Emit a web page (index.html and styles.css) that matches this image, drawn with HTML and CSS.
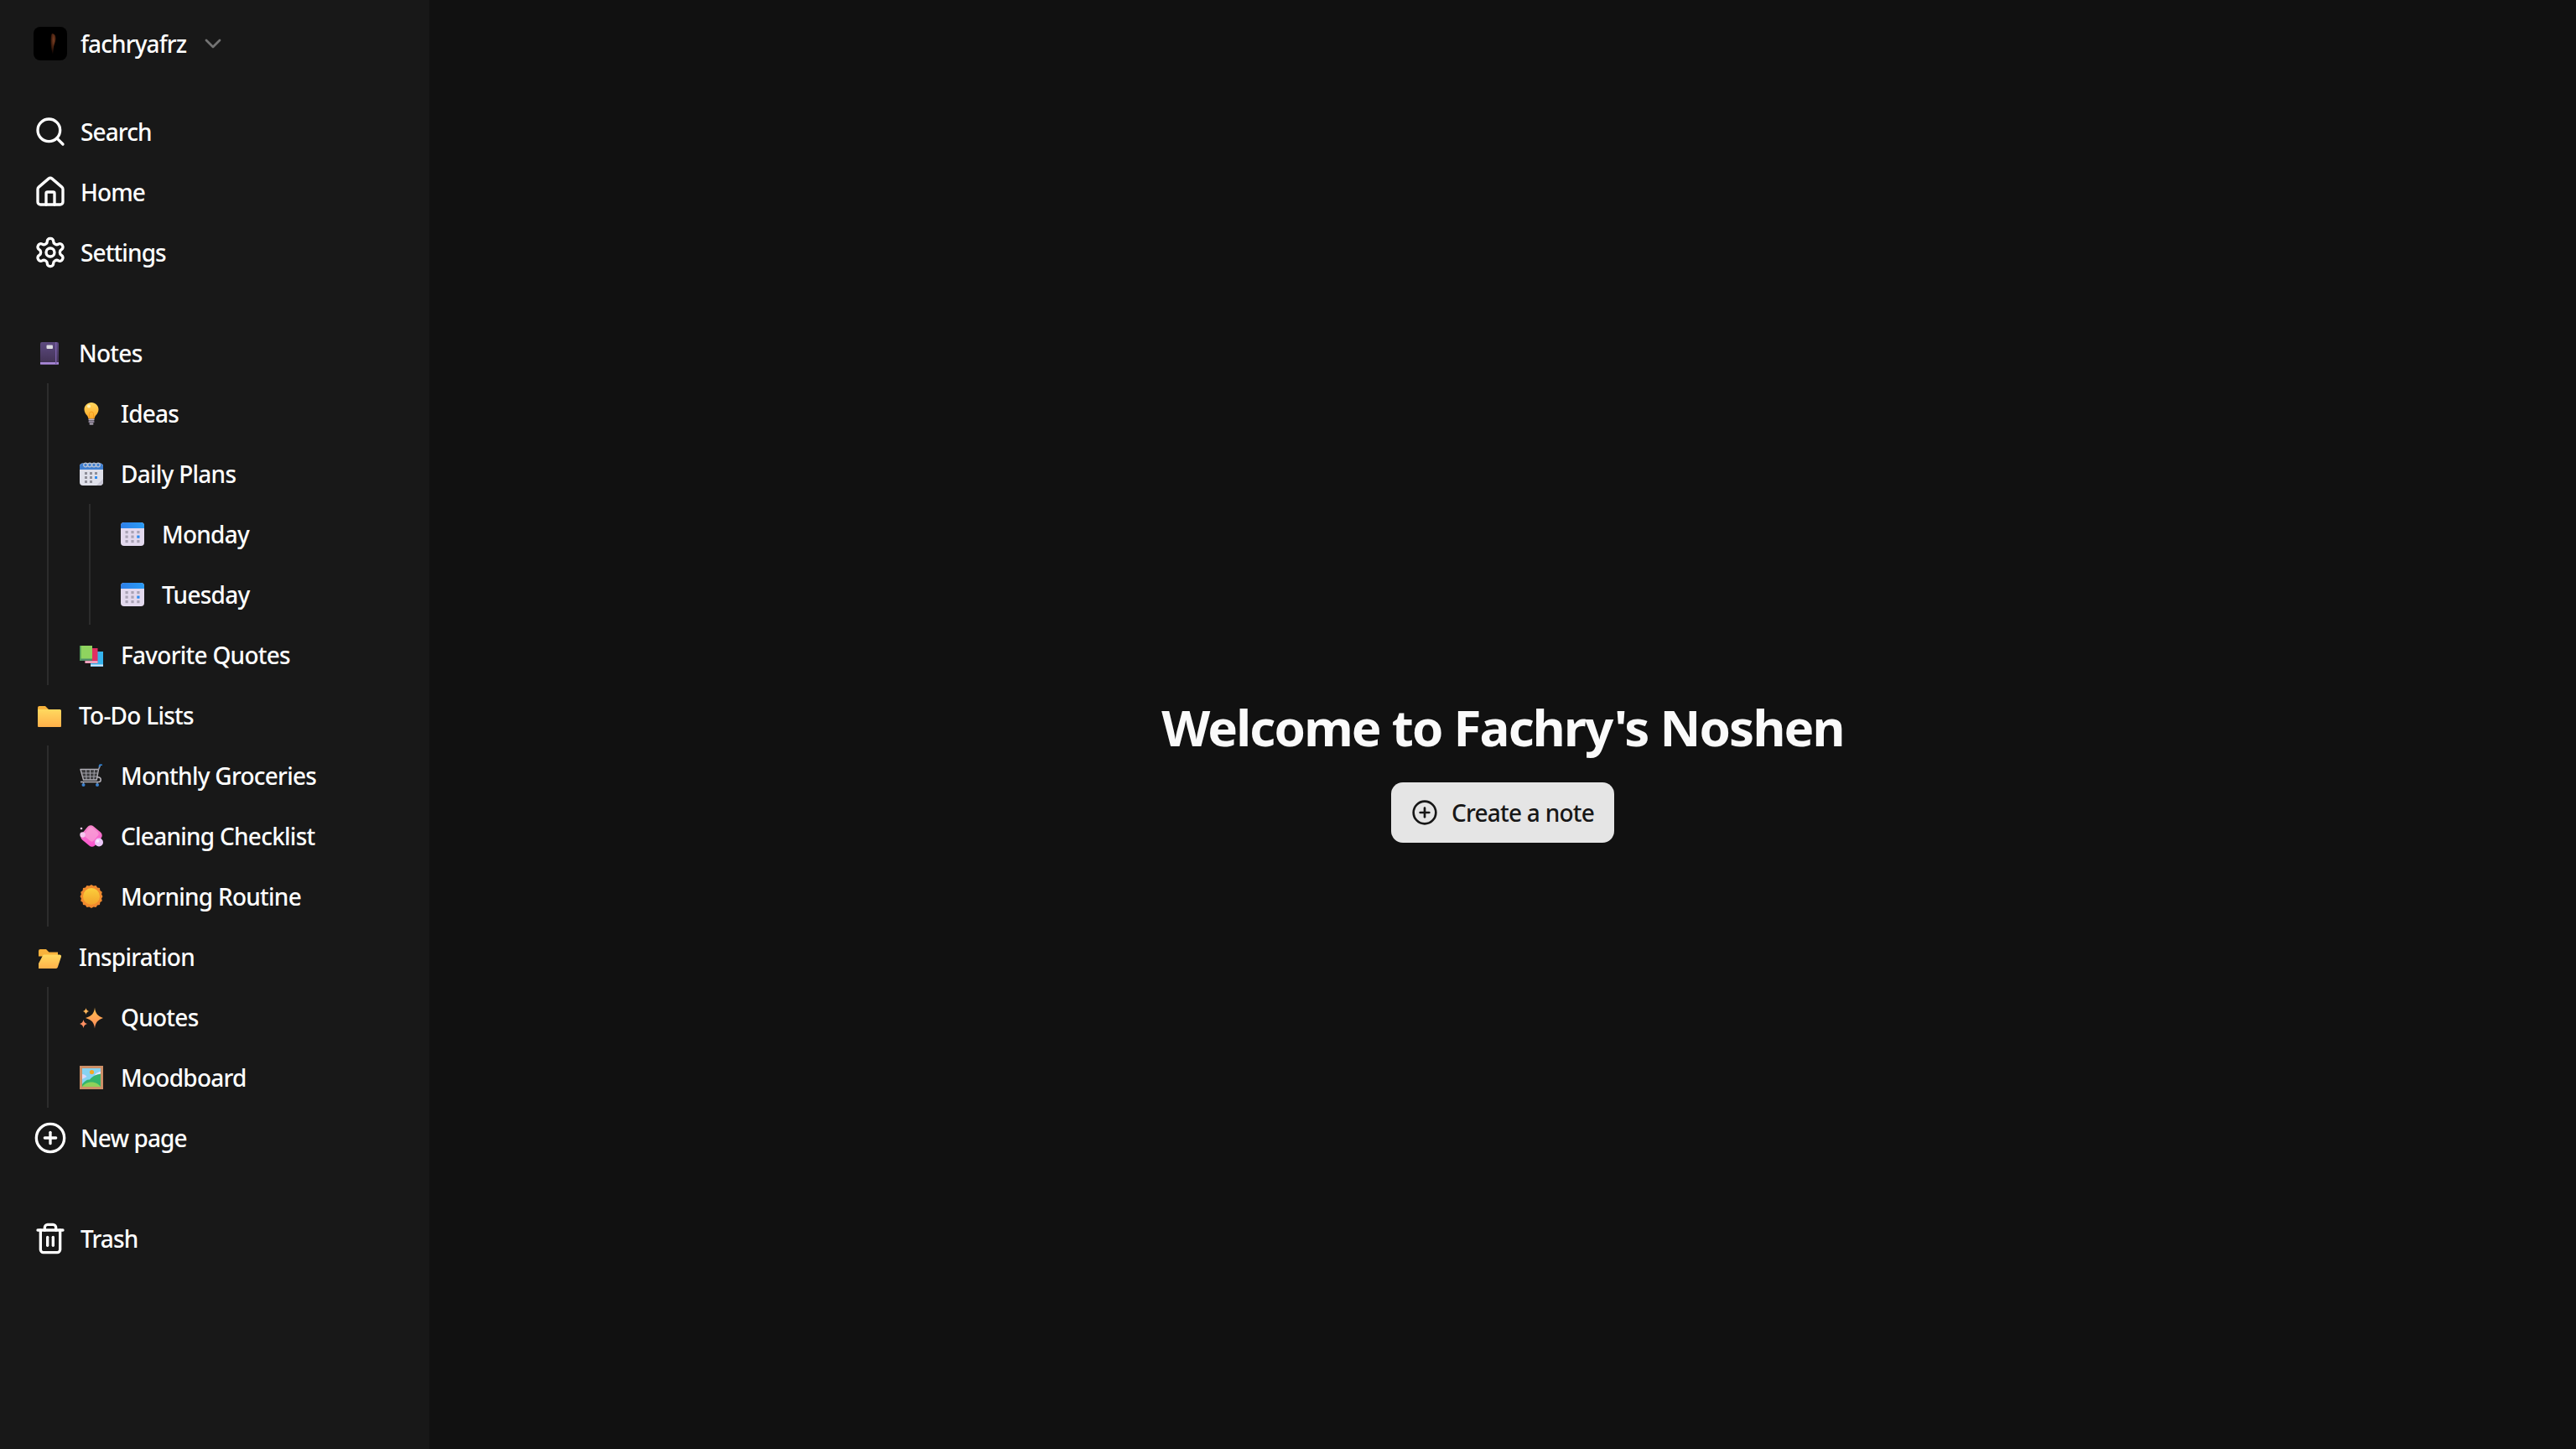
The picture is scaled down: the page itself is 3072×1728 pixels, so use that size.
FILE: index.html
```html
<!DOCTYPE html>
<html lang="en">

<head>
    <meta charset="UTF-8">
    <title>Fachry's Noshen</title>
    <link rel="stylesheet" href="styles.css">
</head>

<body>
    <!-- icones desenhados uma vez e reutilizados -->
    <svg class="defs" width="0" height="0">
        <defs>
            <linearGradient id="g-book" x1="0" y1="0" x2="0" y2="1"><stop offset="0" stop-color="#5d4a80"/><stop offset="1" stop-color="#3f3050"/></linearGradient>
            <linearGradient id="g-bulb" x1="0" y1="0" x2="0" y2="1"><stop offset="0" stop-color="#ffd75e"/><stop offset="1" stop-color="#ffa726"/></linearGradient>
            <linearGradient id="g-head" x1="0" y1="0" x2="1" y2="0"><stop offset="0" stop-color="#2e7fe8"/><stop offset="1" stop-color="#2a9bf5"/></linearGradient>
            <linearGradient id="g-folder" x1="0" y1="0" x2="0" y2="1"><stop offset="0" stop-color="#ffd95f"/><stop offset="1" stop-color="#ffb04a"/></linearGradient>
            <linearGradient id="g-pink" x1="0" y1="0" x2="1" y2="1"><stop offset="0" stop-color="#f58ac8"/><stop offset="1" stop-color="#fb4fd0"/></linearGradient>
            <linearGradient id="g-sun" x1="0" y1="0" x2="0" y2="1"><stop offset="0" stop-color="#fbcf3c"/><stop offset="1" stop-color="#f3a32b"/></linearGradient>
            <linearGradient id="g-star" x1="0" y1="0" x2="0" y2="1"><stop offset="0" stop-color="#ffc04d"/><stop offset="1" stop-color="#ff8a5c"/></linearGradient>

            <symbol id="e-book" viewBox="0 0 28 28">
                <rect x="3" y="1" width="22" height="27" rx="2" fill="url(#g-book)"/>
                <rect x="3" y="25" width="22" height="2.6" fill="#a988d8"/>
                <rect x="21" y="1" width="1.4" height="27" fill="#7a5fa8"/>
                <rect x="10.5" y="4.5" width="7.5" height="4.5" rx="1" fill="#dcdce0"/>
            </symbol>
            <symbol id="e-bulb" viewBox="0 0 28 28">
                <path d="M14 1C9.2 1 5.5 4.7 5.5 9.3c0 3 1.4 5 2.9 6.8 1.2 1.4 1.9 2.8 2 4.4h7.2c.1-1.6.8-3 2-4.4 1.5-1.8 2.9-3.8 2.9-6.8C22.500 4.700 18.800 1 14 1z" fill="url(#g-bulb)"/>
                <circle cx="11" cy="5.500" r="2" fill="#fff1b8"/>
                <path d="M11.500 20v-5.500a2.500 2.500 0 1 1 5 0V20" fill="none" stroke="#f59a1c" stroke-width="1"/>
                <rect x="10.400" y="20.500" width="7.200" height="2" rx="1" fill="#bdb3c6"/>
                <rect x="10.400" y="23" width="7.200" height="2" rx="1" fill="#8f8599"/>
                <rect x="11.500" y="25.500" width="5" height="2" rx="1" fill="#bdb3c6"/>
            </symbol>
            <symbol id="e-cal-spiral" viewBox="0 0 28 28">
                <rect x="0" y="1.500" width="28" height="26.500" rx="4" fill="#dfe0ea"/>
                <path d="M0 9V5.500a4 4 0 0 1 4-4h20a4 4 0 0 1 4 4V9z" fill="#3f7fd0"/>
                <g fill="none" stroke="#b9c4d6" stroke-width="1.300">
                    <circle cx="7" cy="3.500" r="2.300"/><circle cx="12" cy="3.500" r="2.300"/><circle cx="17" cy="3.500" r="2.300"/><circle cx="22" cy="3.500" r="2.300"/>
                </g>
                <g fill="#8f8f99">
                    <rect x="6" y="12" width="3" height="3"/><rect x="12" y="12" width="3" height="3"/><rect x="18" y="12" width="3" height="3"/>
                    <rect x="6" y="17" width="3" height="3"/><rect x="12" y="17" width="3" height="3"/>
                    <rect x="6" y="22" width="3" height="3"/><rect x="12" y="22" width="3" height="3"/>
                </g>
                <rect x="18" y="17" width="3" height="3" fill="#2e8cf0"/>
                <path d="M28 20l-8 8h3.500a4.500 4.500 0 0 0 4.500-4.500z" fill="#c8c6d4"/>
            </symbol>
            <symbol id="e-cal" viewBox="0 0 28 28">
                <rect x="0" y="0" width="28" height="28" rx="4" fill="#e3d9ee"/>
                <path d="M0 7V4a4 4 0 0 1 4-4h20a4 4 0 0 1 4 4v3z" fill="url(#g-head)"/>
                <g fill="#a9a3b5">
                    <rect x="5.500" y="10" width="3.200" height="3.200"/><rect x="12.400" y="10" width="3.200" height="3.200"/><rect x="19.300" y="10" width="3.200" height="3.200"/>
                    <rect x="5.500" y="15.500" width="3.200" height="3.200"/><rect x="12.400" y="15.500" width="3.200" height="3.200"/>
                    <rect x="5.500" y="21" width="3.200" height="3.200"/><rect x="12.400" y="21" width="3.200" height="3.200"/><rect x="19.300" y="21" width="3.200" height="3.200"/>
                </g>
                <rect x="19.300" y="15.500" width="3.200" height="3.200" fill="#2e8cf0"/>
            </symbol>
            <symbol id="e-books" viewBox="0 0 28 28">
                <rect x="13" y="10" width="15" height="18" fill="#35b4ee"/>
                <rect x="13" y="25.500" width="15" height="2" fill="#d7e4f7"/>
                <rect x="6.500" y="6" width="15" height="18" fill="#e02f62"/>
                <rect x="6.500" y="21.500" width="15" height="2" fill="#f0cfe0"/>
                <rect x="0" y="3" width="15" height="18" fill="#8fd45f"/>
                <rect x="0" y="18.500" width="15" height="2.500" fill="#4f8d6a"/>
                <rect x="0" y="3" width="1.600" height="18" fill="#4f9a58"/>
            </symbol>
            <symbol id="e-folder" viewBox="0 0 28 28">
                <path d="M0 5a2 2 0 0 1 2-2h7l4 4H0z" fill="#f7b23c"/>
                <path d="M0 7h26.500A1.500 1.500 0 0 1 28 8.500V27a1 1 0 0 1-1 1H1a1 1 0 0 1-1-1z" fill="url(#g-folder)"/>
            </symbol>
            <symbol id="e-folder-open" viewBox="0 0 28 28">
                <path d="M1 7a2 2 0 0 1 2-2h7l3.500 3.500H24v5H1z" fill="#f7b23c"/>
                <path d="M1 28 1 22 6 12.500a2 2 0 0 1 1.800-1H26a2 2 0 0 1 1.900 2.700l-4.200 12.600A2 2 0 0 1 22 28z" fill="url(#g-folder)"/>
            </symbol>
            <symbol id="e-cart" viewBox="0 0 28 28">
                <path d="M1 6.500h21.500l-2.200 12.500H4.500z" fill="#3a3a3c" stroke="#b0aeb6" stroke-width="1.400" stroke-linejoin="round"/>
                <path d="M2.500 11h19M3.500 15h17M7.500 6.500l.6 12.500M12.500 6.500v12.500M17.500 6.500l-.8 12.500" fill="none" stroke="#a09fa8" stroke-width="1.100"/>
                <path d="M22.300 7 24.500 2" stroke="#9a9aa4" stroke-width="1.500" fill="none"/>
                <path d="M23 3.500 24.200 1l2.800.3" stroke="#2e7fd0" stroke-width="1.600" fill="none"/>
                <path d="M20.500 15.500l2.500.5c3 .7 3 5.500-.2 5.500H1" fill="none" stroke="#b5b2ba" stroke-width="1.500"/>
                <circle cx="4.500" cy="25" r="2" fill="#3b82d0"/>
                <circle cx="21" cy="25" r="2" fill="#3b82d0"/>
                <rect x="3.800" y="21.500" width="1.400" height="2" fill="#9a9aa4"/>
                <rect x="20.300" y="21.500" width="1.400" height="2" fill="#9a9aa4"/>
            </symbol>
            <symbol id="e-soap" viewBox="0 0 28 28">
                <rect x="3.500" y="3.500" width="21" height="21" rx="5" transform="rotate(40 14 14)" fill="url(#g-pink)"/>
                <rect x="7" y="5" width="14" height="14" rx="3.500" transform="rotate(40 14 12)" fill="#f9a2d9" opacity=".7"/>
                <circle cx="3.500" cy="12.500" r="3.200" fill="#f5c6ee"/>
                <circle cx="2" cy="5" r="1.300" fill="#e9c3e4"/>
                <circle cx="23" cy="21.500" r="5" fill="#ecc7f8"/>
                <circle cx="21.500" cy="20" r="1.800" fill="#fbeeff"/>
            </symbol>
            <symbol id="e-sun" viewBox="0 0 28 28">
                <path d="M14 0l2.600 1.400L19.500 1l1.600 2.500 2.900.6.400 2.900 2.400 1.700-.7 2.900L27.500 14l-1.400 2.600.7 2.800-2.400 1.700-.4 2.900-2.900.6L19.500 27l-2.900-.5L14 28l-2.600-1.500-2.900.5-1.600-2.400-2.900-.6-.4-2.900-2.400-1.700.7-2.800L.5 14l1.400-2.400-.7-2.900 2.400-1.700.4-2.900 2.900-.6L8.500 1l2.900.4z" fill="#f18a2e"/>
                <circle cx="14" cy="14" r="10" fill="url(#g-sun)"/>
            </symbol>
            <symbol id="e-sparkles" viewBox="0 0 28 28">
                <path d="M18 2.500c.8 6.800 3.200 10.200 10 12.500-6.800 2.300-9.200 5.700-10 12.500-.8-6.800-3.200-10.200-11-12.500 7.800-2.300 10.200-5.700 11-12.500z" fill="url(#g-star)"/>
                <path d="M7.500 3c.4 2.200 1.500 3.300 3.700 4-2.200.7-3.300 1.800-3.700 4-.4-2.200-1.500-3.300-3.700-4 2.200-.7 3.300-1.800 3.700-4z" fill="#fdb458"/>
                <path d="M4.500 17c.5 2.700 1.700 4 4.500 5-2.800 1-4 2.300-4.500 5-.5-2.700-1.700-4-4.500-5 2.800-1 4-2.300 4.500-5z" fill="#ff8f62"/>
            </symbol>
            <symbol id="e-picture" viewBox="0 0 28 28">
                <rect width="28" height="28" fill="#cd9068"/>
                <rect x="3" y="3" width="22" height="22" fill="#86d3f2"/>
                <path d="M3 10c2 0 4 1 5.500 3L3 16z" fill="#dcd9f7"/>
                <path d="M25 7c-2 0-6 2-7 4 2.500.5 5 0 7-1z" fill="#e6e2fa"/>
                <circle cx="14.500" cy="7.500" r="2.600" fill="#f4a823"/>
                <path d="M3 22c3-4 6-6 9-5.500 4-5 9-6 13-7V25H3z" fill="#34b56c"/>
                <path d="M3 25c3-4 7-5.500 11-5.500s8 1.500 11 5.500z" fill="#8fd25a"/>
            </symbol>
        </defs>
    </svg>

    <aside class="sidebar">
        <div class="conta">
            <svg class="avatar" viewBox="0 0 40 40">
                <defs><radialGradient id="g-face" cx=".55" cy=".3" r=".7"><stop offset="0" stop-color="#7a4024"/><stop offset=".6" stop-color="#3e1b0c"/><stop offset="1" stop-color="#0c0301"/></radialGradient></defs>
                <rect width="40" height="40" rx="8" fill="#000"/>
                <path d="M22 8c3 0 5 3 4.500 7-.3 3-2 6-2.500 9l-1 9c-1-3-2.500-9-2.500-15 0-5 .5-9 1.500-10z" fill="url(#g-face)"/>
            </svg>
            <span>fachryafrz</span>
            <svg class="chevron" viewBox="0 0 24 24"><path d="m6 9 6 6 6-6"/></svg>
        </div>

        <nav class="grupo">
            <a class="item">
                <svg class="ico" viewBox="0 0 24 24"><circle cx="11" cy="11" r="8"/><path d="m21 21-4.300-4.300"/></svg>
                <span>Search</span>
            </a>
            <a class="item">
                <svg class="ico" viewBox="0 0 24 24"><path d="M15 21v-8a1 1 0 0 0-1-1h-4a1 1 0 0 0-1 1v8"/><path d="M3 10a2 2 0 0 1 .709-1.528l7-5.999a2 2 0 0 1 2.582 0l7 5.999A2 2 0 0 1 21 10v9a2 2 0 0 1-2 2H5a2 2 0 0 1-2-2z"/></svg>
                <span>Home</span>
            </a>
            <a class="item">
                <svg class="ico" viewBox="0 0 24 24"><path d="M12.220 2h-.44a2 2 0 0 0-2 2v.18a2 2 0 0 1-1 1.730l-.43.25a2 2 0 0 1-2 0l-.15-.08a2 2 0 0 0-2.730.73l-.22.38a2 2 0 0 0 .73 2.730l.15.1a2 2 0 0 1 1 1.720v.51a2 2 0 0 1-1 1.740l-.15.09a2 2 0 0 0-.73 2.730l.22.38a2 2 0 0 0 2.730.73l.15-.08a2 2 0 0 1 2 0l.43.25a2 2 0 0 1 1 1.730V20a2 2 0 0 0 2 2h.44a2 2 0 0 0 2-2v-.18a2 2 0 0 1 1-1.730l.43-.25a2 2 0 0 1 2 0l.15.08a2 2 0 0 0 2.730-.73l.22-.39a2 2 0 0 0-.73-2.730l-.15-.08a2 2 0 0 1-1-1.740v-.5a2 2 0 0 1 1-1.740l.15-.09a2 2 0 0 0 .73-2.730l-.22-.38a2 2 0 0 0-2.730-.73l-.15.08a2 2 0 0 1-2 0l-.43-.25a2 2 0 0 1-1-1.730V4a2 2 0 0 0-2-2z"/><circle cx="12" cy="12" r="3"/></svg>
                <span>Settings</span>
            </a>
        </nav>

        <div class="grupo">
            <a class="pagina"><svg class="emoji"><use href="#e-book"/></svg><span>Notes</span></a>
            <div class="arvore">
                <a class="pagina"><svg class="emoji"><use href="#e-bulb"/></svg><span>Ideas</span></a>
                <a class="pagina"><svg class="emoji"><use href="#e-cal-spiral"/></svg><span>Daily Plans</span></a>
                <div class="arvore">
                    <a class="pagina"><svg class="emoji"><use href="#e-cal"/></svg><span>Monday</span></a>
                    <a class="pagina"><svg class="emoji"><use href="#e-cal"/></svg><span>Tuesday</span></a>
                </div>
                <a class="pagina"><svg class="emoji"><use href="#e-books"/></svg><span>Favorite Quotes</span></a>
            </div>
            <a class="pagina"><svg class="emoji"><use href="#e-folder"/></svg><span>To-Do Lists</span></a>
            <div class="arvore">
                <a class="pagina"><svg class="emoji"><use href="#e-cart"/></svg><span>Monthly Groceries</span></a>
                <a class="pagina"><svg class="emoji"><use href="#e-soap"/></svg><span>Cleaning Checklist</span></a>
                <a class="pagina"><svg class="emoji"><use href="#e-sun"/></svg><span>Morning Routine</span></a>
            </div>
            <a class="pagina"><svg class="emoji"><use href="#e-folder-open"/></svg><span>Inspiration</span></a>
            <div class="arvore">
                <a class="pagina"><svg class="emoji"><use href="#e-sparkles"/></svg><span>Quotes</span></a>
                <a class="pagina"><svg class="emoji"><use href="#e-picture"/></svg><span>Moodboard</span></a>
            </div>
            <a class="item">
                <svg class="ico" viewBox="0 0 24 24"><circle cx="12" cy="12" r="10"/><path d="M8 12h8"/><path d="M12 8v8"/></svg>
                <span>New page</span>
            </a>
        </div>

        <nav class="grupo">
            <a class="item">
                <svg class="ico" viewBox="0 0 24 24"><path d="M3 6h18"/><path d="M19 6v14c0 1-1 2-2 2H7c-1 0-2-1-2-2V6"/><path d="M8 6V4c0-1 1-2 2-2h4c1 0 2 1 2 2v2"/><path d="M10 11v6"/><path d="M14 11v6"/></svg>
                <span>Trash</span>
            </a>
        </nav>
    </aside>

    <main class="conteudo">
        <h1>Welcome to Fachry's Noshen</h1>
        <button class="criar">
            <svg viewBox="0 0 24 24"><circle cx="12" cy="12" r="10"/><path d="M8 12h8"/><path d="M12 8v8"/></svg>
            <span>Create a note</span>
        </button>
    </main>
</body>

</html>
```

FILE: styles.css
```css
* {
    box-sizing: border-box;
}

html,
body {
    height: 100%;
}

body {
    margin: 0;
    display: flex;
    background-color: #111111;
    color: #ffffff;
    font-family: "Noto Sans", "Open Sans", sans-serif;
    font-size: 28px;
    font-weight: 500;
    overflow: hidden;
}

.defs {
    position: absolute;
}

.sidebar {
    width: 512px;
    flex-shrink: 0;
    padding-top: 32px;
    background-color: #181818;
}

.conta {
    display: flex;
    align-items: center;
    gap: 16px;
    height: 40px;
    padding-left: 40px;
    margin-bottom: 49px;
}

.conta span {
    letter-spacing: -0.9px;
}

.avatar {
    width: 40px;
    height: 40px;
}

.chevron {
    width: 32px;
    height: 32px;
    fill: none;
    stroke: #737373;
    stroke-width: 2;
    stroke-linecap: round;
    stroke-linejoin: round;
}

.grupo {
    margin-bottom: 48px;
}

.item,
.pagina {
    display: flex;
    align-items: center;
    height: 72px;
    letter-spacing: -0.75px;
}

.item {
    gap: 16px;
    padding-left: 40px;
    letter-spacing: -0.9px;
}

.ico {
    width: 40px;
    height: 40px;
    fill: none;
    stroke: #ffffff;
    stroke-width: 2;
    stroke-linecap: round;
    stroke-linejoin: round;
}

.pagina {
    gap: 21px;
    padding-left: 45px;
}

.emoji {
    width: 28px;
    height: 28px;
    flex-shrink: 0;
}

.arvore {
    margin-left: 56px;
    padding-left: 37px;
    border-left: 2px solid #2c2c2c;
}

.arvore .pagina {
    padding-left: 0;
}

.arvore .arvore {
    margin-left: 11px;
    padding-left: 36px;
}

.conteudo {
    flex: 1;
    display: flex;
    flex-direction: column;
    align-items: center;
    justify-content: center;
    padding-top: 105px;
}

.conteudo h1 {
    margin: 0 0 28px;
    font-size: 60px;
    line-height: 76px;
    font-weight: 700;
    color: #fafafa;
    letter-spacing: -1.8px;
}

.criar {
    display: flex;
    align-items: center;
    gap: 16px;
    height: 72px;
    padding: 0 24px;
    border: 0;
    border-radius: 14px;
    background-color: #e5e5e5;
    color: #171717;
    font-family: inherit;
    font-size: 28px;
    font-weight: 500;
    letter-spacing: -0.75px;
}

.criar svg {
    width: 32px;
    height: 32px;
    fill: none;
    stroke: #171717;
    stroke-width: 2;
    stroke-linecap: round;
    stroke-linejoin: round;
}
```
